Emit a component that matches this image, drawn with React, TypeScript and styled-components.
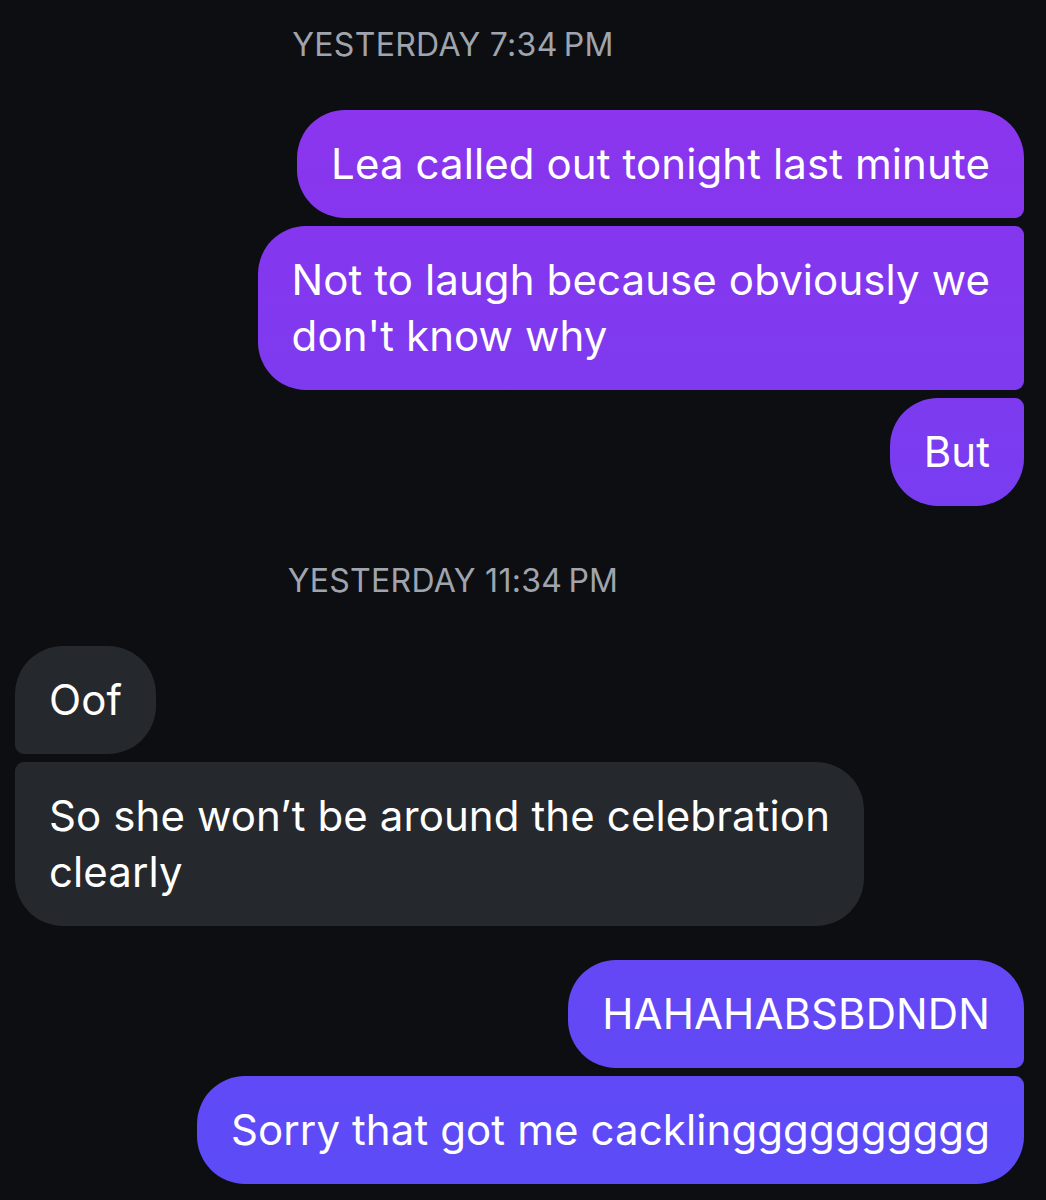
import React from 'react';
import styled, { createGlobalStyle } from 'styled-components';

const GlobalStyle = createGlobalStyle`
  html, body {
    margin: 0;
    padding: 0;
    background: #0c0e12;
  }
  body {
    font-family: Inter, 'Liberation Sans', sans-serif;
    -webkit-font-smoothing: antialiased;
  }
`;

type Corner = 'tl' | 'tr' | 'br' | 'bl';

const BIG = 48;
const SMALL = 9;

const r = (small: Corner[], c: Corner) => (small.includes(c) ? SMALL : BIG);

const Thread = styled.div`
  display: flex;
  flex-direction: column;
  padding: 25px 22px 0 15px;
  min-height: 1200px;
  box-sizing: border-box;
`;

const TimeRow = styled.div<{ $gapTop?: number }>`
  text-align: center;
  padding-right: 133px;
  margin-top: ${(p) => p.$gapTop ?? 0}px;
  margin-bottom: 45px;
  font-size: 32px;
  line-height: 40px;
  color: #a0a4ad;
  letter-spacing: 0.3px;
`;

const Group = styled.div`
  display: flex;
  flex-direction: column;
  gap: 8px;
`;

const Row = styled.div<{ $mine: boolean }>`
  display: flex;
  justify-content: ${(p) => (p.$mine ? 'flex-end' : 'flex-start')};
`;

const Bubble = styled.div<{ $mine: boolean; $small: Corner[] }>`
  padding: 26px 34px;
  font-size: 42px;
  line-height: 56px;
  white-space: nowrap;
  color: #ffffff;
  letter-spacing: 0.1px;
  border-radius: ${(p) =>
    `${r(p.$small, 'tl')}px ${r(p.$small, 'tr')}px ${r(p.$small, 'br')}px ${r(p.$small, 'bl')}px`};
  background: ${(p) =>
    p.$mine
      ? 'linear-gradient(to bottom, #9233ee 0%, #8437ee 20%, #5b4cf7 100%) fixed'
      : '#25282c'};
`;

type Msg = { mine: boolean; lines: string[]; small: Corner[] };

const first: Msg[] = [
  { mine: true, lines: ['Lea called out tonight last minute'], small: ['br'] },
  { mine: true, lines: ['Not to laugh because obviously we', "don't know why"], small: ['tr', 'br'] },
  { mine: true, lines: ['But'], small: ['tr'] },
];

const second: Msg[] = [
  { mine: false, lines: ['Oof'], small: ['bl'] },
  { mine: false, lines: ['So she won\u2019t be around the celebration', 'clearly'], small: ['tl'] },
];

const third: Msg[] = [
  { mine: true, lines: ['HAHAHABSBDNDN'], small: ['br'] },
  { mine: true, lines: ['Sorry that got me cacklingggggggggg'], small: ['tr'] },
];

function Messages({ items }: { items: Msg[] }) {
  return (
    <Group>
      {items.map((m, i) => (
        <Row key={i} $mine={m.mine}>
          <Bubble $mine={m.mine} $small={m.small}>
            {m.lines.map((line, j) => (
              <React.Fragment key={j}>
                {j > 0 && <br />}
                {line}
              </React.Fragment>
            ))}
          </Bubble>
        </Row>
      ))}
    </Group>
  );
}

const Spacer = styled.div<{ $h: number }>`
  height: ${(p) => p.$h}px;
`;

export default function App() {
  return (
    <>
      <GlobalStyle />
      <Thread>
        <TimeRow>YESTERDAY 7:34{'\u202F'}PM</TimeRow>
        <Messages items={first} />
        <TimeRow $gapTop={55}>YESTERDAY 11:34{'\u202F'}PM</TimeRow>
        <Messages items={second} />
        <Spacer $h={34} />
        <Messages items={third} />
      </Thread>
    </>
  );
}
